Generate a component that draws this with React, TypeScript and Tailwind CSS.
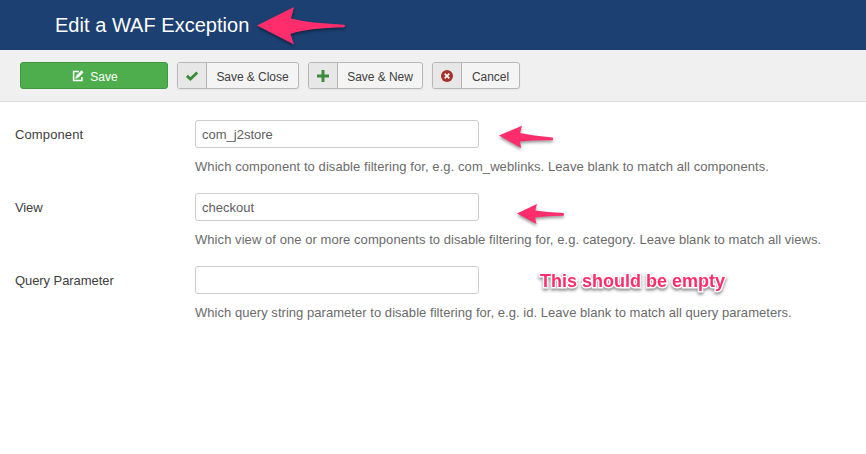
import type { ReactNode } from "react";

function ToolButton({ icon, label, width }: { icon: ReactNode; label: string; width: string }) {
  return (
    <button
      className={`flex h-[27px] overflow-hidden rounded-[3px] border border-[#b7b7b7] bg-[#f4f4f4] text-[12px] text-[#404040] shadow-[0_1px_2px_rgba(0,0,0,0.05)] ${width}`}
    >
      <span className="flex h-full w-[29px] shrink-0 items-center justify-center border-r border-[#b3b3b3] bg-[#e7e7e7]">
        {icon}
      </span>
      <span className="flex h-full flex-1 items-center justify-center pt-[2px] tracking-[-0.04px] whitespace-nowrap">
        {label}
      </span>
    </button>
  );
}

function Arrow({ d, className, viewBox }: { d: string; className: string; viewBox: string }) {
  return (
    <svg
      viewBox={viewBox}
      className={`absolute overflow-visible drop-shadow-[0_2px_1.5px_rgba(0,0,0,0.4)] ${className}`}
    >
      <path d={d} fill="#ff2d6b" />
    </svg>
  );
}

function Field({
  label,
  labelClass,
  value,
  help,
  helpClass,
  children,
}: {
  label: string;
  labelClass: string;
  value: string;
  help: string;
  helpClass: string;
  children: ReactNode;
}) {
  return (
    <div className="flex h-[73px] text-[13px] leading-[18px]">
      <label className={`w-[180px] shrink-0 pt-[6px] text-[#404040] ${labelClass}`}>{label}</label>
      <div className="relative">
        <input
          className="block h-[28px] w-[284px] rounded-[3px] border border-[#ccc] bg-white px-[6px] pt-[1px] text-[13px] text-[#606060] outline-none"
          defaultValue={value}
        />
        <p className={`mt-[10px] whitespace-nowrap text-[#6b6b6b] ${helpClass}`}>{help}</p>
        {children}
      </div>
    </div>
  );
}

export default function App() {
  return (
    <div className="h-[454px] w-[866px] overflow-hidden bg-white font-['Liberation_Sans',Arial,sans-serif]">
      <header className="relative flex h-[50px] items-center bg-[#1c4072] pl-[55px]">
        <h1 className="text-[20px] leading-[30px] tracking-[0.03px] whitespace-nowrap text-white">Edit a WAF Exception</h1>
        <Arrow
          className="top-[7px] left-[257px] h-[38px] w-[89px]"
          viewBox="257 7 89 38"
          d="M257 25.5 L294 7 L291 18.5 C306 22.500 326 23.500 344 24.800 Q346 26 344 27.200 C322 28 305 29 290.500 34 L294 44.500 Z"
        />
      </header>
      <div className="flex h-[52px] gap-[9px] border-b border-[#dcdcdc] bg-[#f0f0f0] pt-[12px] pl-[20px]">
        <button className="flex h-[27px] w-[148px] items-center justify-center gap-[6px] rounded-[3px] border border-[#409740] bg-[#4eae4e] pl-[2px] text-[12px] text-white">
          <svg viewBox="0 0 12 12" className="h-[12px] w-[12px]">
            <path d="M7 1.600 H1.600 V10.400 H9.900 V7" fill="none" stroke="white" strokeWidth="1.500" />
            <path d="M3.300 8.800 L3.900 6 L9.500 0.300 L11.500 2.300 L6 8 Z" fill="white" />
            <path d="M4.500 6.500 L5.600 7.600" stroke="#4eae4e" strokeWidth="0.600" />
          </svg>
          <span className="pt-[2px] leading-[18px]">Save</span>
        </button>
        <ToolButton
          label="Save & Close"
          width="w-[122px]"
          icon={
            <svg viewBox="0 0 12 10" className="h-[10px] w-[12px] overflow-visible">
              <path d="M0.900 4.900 L4.400 8 L11.300 1.500" fill="none" stroke="#3c8a3c" strokeWidth="2.800" />
            </svg>
          }
        />
        <ToolButton
          label="Save & New"
          width="w-[115px]"
          icon={
            <svg viewBox="0 0 12 12" className="h-[12px] w-[12px]">
              <path d="M6 0 V12 M0 6 H12" fill="none" stroke="#3c8a3c" strokeWidth="3" />
            </svg>
          }
        />
        <ToolButton
          label="Cancel"
          width="w-[88px]"
          icon={
            <svg viewBox="0 0 12 12" className="h-[12px] w-[12px]">
              <circle cx="6" cy="6" r="6" fill="#a5302a" />
              <path d="M3.700 3.700 L8.300 8.300 M8.300 3.700 L3.700 8.300" stroke="#f4f4f4" strokeWidth="1.900" />
            </svg>
          }
        />
      </div>
      <main className="pt-[18px] pl-[15px]">
        <Field
          label="Component"
          labelClass="tracking-[0.12px]"
          value="com_j2store"
          help="Which component to disable filtering for, e.g. com_weblinks. Leave blank to match all components."
          helpClass="tracking-[0.077px]"
        >
          <Arrow
            className="top-[6px] left-[304px] h-[22px] w-[54px]"
            viewBox="499 126 54 22"
            d="M499 135.500 L522 125.800 L520 133 Q533 135.800 552.500 137.500 Q553.800 139 552.500 140.300 Q534 140 520 141.500 L521 148 Z"
          />
        </Field>
        <Field
          label="View"
          labelClass="tracking-[-0.1px]"
          value="checkout"
          help="Which view of one or more components to disable filtering for, e.g. category. Leave blank to match all views."
          helpClass="tracking-[0.06px]"
        >
          <Arrow
            className="top-[11px] left-[322px] h-[20px] w-[47px]"
            viewBox="517 204 47 20"
            d="M517 213.500 L537 204 L535.200 210.500 Q547 212 563.500 213 Q564.800 214.500 563.500 215.800 Q548 215.800 535 217.500 L536.500 224 Z"
          />
        </Field>
        <Field
          label="Query Parameter"
          labelClass="tracking-[-0.07px]"
          value=""
          help="Which query string parameter to disable filtering for, e.g. id. Leave blank to match all query parameters."
          helpClass="tracking-[0.04px]"
        >
          <span className="absolute top-[4px] left-[345px] text-[18px] leading-[22px] font-bold whitespace-nowrap text-[#ff2d6b] [paint-order:stroke_fill] [-webkit-text-stroke:3px_white] drop-shadow-[0_2px_1.5px_rgba(0,0,0,0.45)]">
            This should be empty
          </span>
        </Field>
      </main>
    </div>
  );
}
